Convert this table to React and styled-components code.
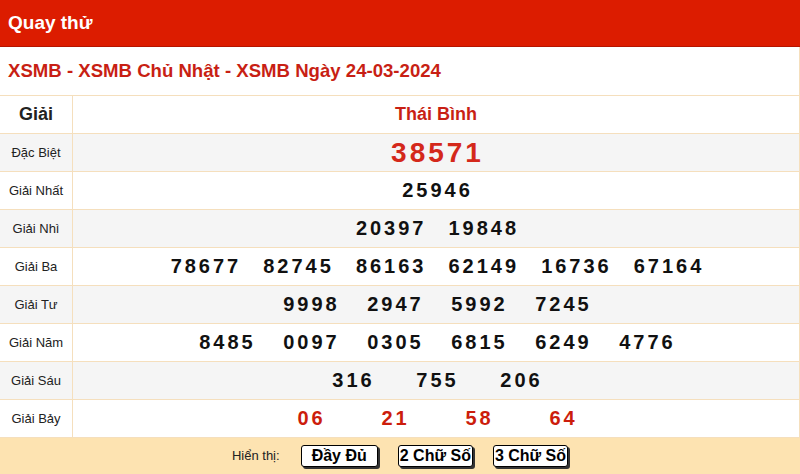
import React from "react";
import styled, { createGlobalStyle } from "styled-components";

const Global = createGlobalStyle`
  html, body { margin: 0; padding: 0; background: #fff; }
  body { font-family: "Liberation Sans", Arial, sans-serif; color: #000; }
`;

const Page = styled.div`
  width: 800px;
  height: 474px;
  overflow: hidden;
  display: flex;
  flex-direction: column;
`;

const Header = styled.div`
  height: 46px;
  flex-shrink: 0;
  background: #dc1c00;
  border-bottom: 1px solid #b51400;
  display: flex;
  align-items: center;
  padding: 0 8px;
  color: #fff;
  font-weight: bold;
  font-size: 19px;
`;

const Title = styled.h2`
  margin: 0;
  height: 48px;
  flex-shrink: 0;
  border-bottom: 1px solid #f5dfbd;
  border-right: 1px solid #f5dfbd;
  display: flex;
  align-items: center;
  padding: 0 8px;
  font-size: 18.6px;
  font-weight: bold;
  color: #c81f14;
`;

const Table = styled.div`
  display: grid;
  grid-template-columns: 73px 1fr;
  border-right: 1px solid #f5dfbd;
`;

const Row = styled.div`
  display: contents;
  & > * {
    background: ${(p) => (p.$alt ? "#f5f5f5" : "#fff")};
  }
`;

const Label = styled.div`
  height: 37px;
  border-bottom: 1px solid #f5dfbd;
  border-right: 1px solid #f5dfbd;
  display: flex;
  align-items: center;
  justify-content: center;
  font-size: ${(p) => (p.$head ? "18px" : "13px")};
  font-weight: ${(p) => (p.$head ? "bold" : "normal")};
  color: #222;
`;

const Cell = styled.div`
  height: 37px;
  border-bottom: 1px solid #f5dfbd;
  display: flex;
  align-items: center;
  justify-content: center;
  gap: 19px;
`;

const Province = styled.span`
  font-size: 18px;
  font-weight: bold;
  color: #c81f14;
`;

const Num = styled.span`
  box-sizing: border-box;
  display: inline-block;
  min-width: 65px;
  text-align: center;
  font-weight: bold;
  font-size: ${(p) => (p.$big ? "28px" : "20px")};
  letter-spacing: 3px;
  padding-left: 3px;
  color: ${(p) => (p.$red ? (p.$big ? "#d4281b" : "#cc1d0c") : "#111")};
`;

const Footer = styled.div`
  flex: 1;
  background: #fde3b1;
  display: flex;
  align-items: center;
  justify-content: center;
  gap: 20px;
  padding-bottom: 1px;
`;

const Hint = styled.span`
  font-size: 13px;
  color: #222;
  margin-right: 1px;
`;

const Btn = styled.button`
  height: 22px;
  padding: 0 ${(p) => (p.$wide ? "10px" : "1px")};
  border: 1px solid #000;
  border-radius: 3px;
  background: #fff;
  box-shadow: 2px 2px 0 #333;
  font-family: "Liberation Sans", Arial, sans-serif;
  font-size: 16px;
  font-weight: bold;
  color: #000;
  line-height: 20px;
`;

const rows = [
  { label: "Đặc Biệt", nums: ["38571"], big: true, red: true },
  { label: "Giải Nhất", nums: ["25946"] },
  { label: "Giải Nhì", nums: ["20397", "19848"] },
  { label: "Giải Ba", nums: ["78677", "82745", "86163", "62149", "16736", "67164"] },
  { label: "Giải Tư", nums: ["9998", "2947", "5992", "7245"] },
  { label: "Giải Năm", nums: ["8485", "0097", "0305", "6815", "6249", "4776"] },
  { label: "Giải Sáu", nums: ["316", "755", "206"] },
  { label: "Giải Bảy", nums: ["06", "21", "58", "64"], red: true },
];

export default function App() {
  return (
    <Page>
      <Global />
      <Header>Quay thử</Header>
      <Title>XSMB - XSMB Chủ Nhật - XSMB Ngày 24-03-2024</Title>
      <Table>
        <Row>
          <Label $head>Giải</Label>
          <Cell>
            <Province>Thái Bình</Province>
          </Cell>
        </Row>
        {rows.map((r, i) => (
          <Row key={r.label} $alt={i % 2 === 0}>
            <Label>{r.label}</Label>
            <Cell>
              {r.nums.map((n, j) => (
                <Num key={j} $big={r.big} $red={r.red}>
                  {n}
                </Num>
              ))}
            </Cell>
          </Row>
        ))}
      </Table>
      <Footer>
        <Hint>Hiển thị:</Hint>
        <Btn $wide>Đầy Đủ</Btn>
        <Btn>2 Chữ Số</Btn>
        <Btn>3 Chữ Số</Btn>
      </Footer>
    </Page>
  );
}
